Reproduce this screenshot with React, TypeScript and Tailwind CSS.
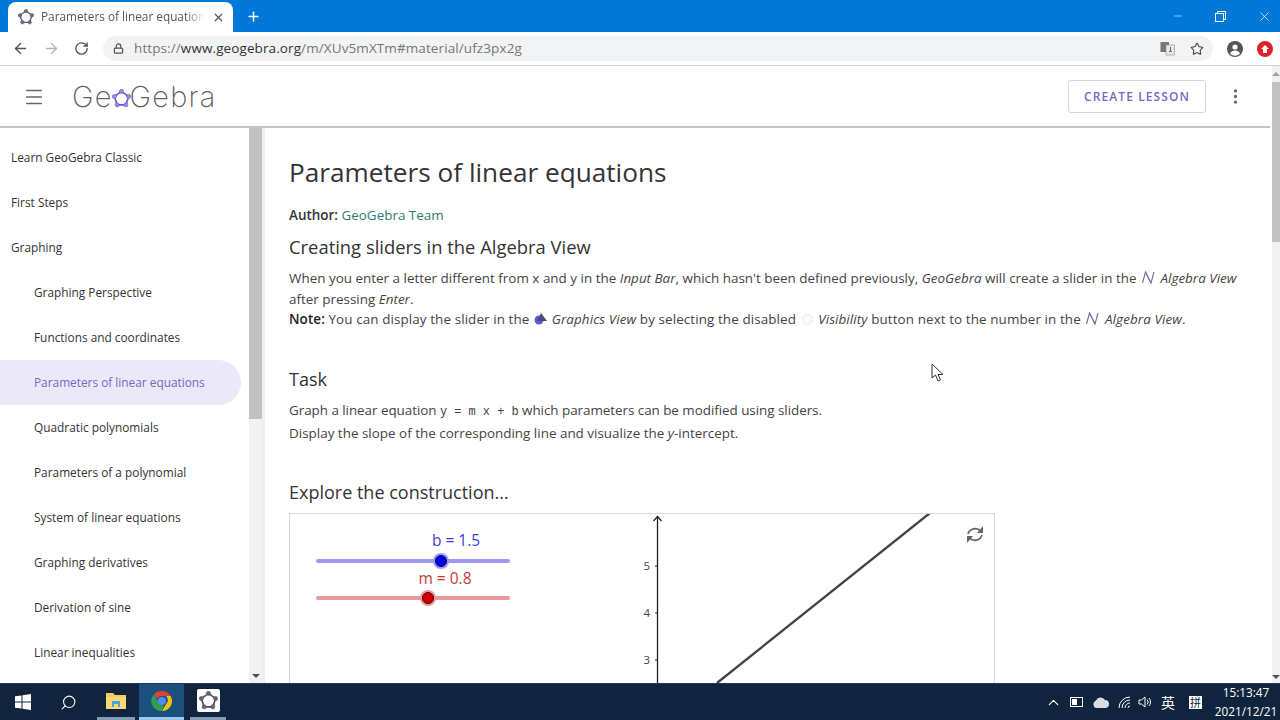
// App.tsx — browser window showing a GeoGebra lesson page, with the Windows taskbar below
import { ArrowLeft, ArrowRight, RotateCw, Lock, Star, Menu, MoreVertical, X, Plus, Minus, Search, ChevronUp } from 'lucide-react';

const NAV = [
  { label: 'Learn GeoGebra Classic' },
  { label: 'First Steps' },
  { label: 'Graphing' },
  { label: 'Graphing Perspective', sub: true },
  { label: 'Functions and coordinates', sub: true },
  { label: 'Parameters of linear equations', sub: true, active: true },
  { label: 'Quadratic polynomials', sub: true },
  { label: 'Parameters of a polynomial', sub: true },
  { label: 'System of linear equations', sub: true },
  { label: 'Graphing derivatives', sub: true },
  { label: 'Derivation of sine', sub: true },
  { label: 'Linear inequalities', sub: true },
];

const FONT = "font-['Open_Sans','Noto_Sans',sans-serif]";

// GeoGebra mark: pentagon with dots on its corners
function Pentagon({ size, stroke = '#6557d2', dot = '#9a8fe0' }: { size: number; stroke?: string; dot?: string }) {
  const pts = [[12, 3], [21, 9.5], [17.5, 20], [6.5, 20], [3, 9.5]];
  return (
    <svg width={size} height={size} viewBox="0 0 24 24" className="shrink-0">
      <polygon points={pts.map(p => p.join(',')).join(' ')} fill="none" stroke={stroke} strokeWidth="2" />
      {pts.map(p => <circle key={p[0]} cx={p[0]} cy={p[1]} r="2.6" fill={dot} stroke={stroke} strokeWidth="0.8" />)}
    </svg>
  );
}

function AlgebraIcon() {
  return (
    <svg width="15" height="15" viewBox="0 0 15 15" className="inline-block align-[-2px] mx-[1px]">
      <path d="M1.5 13 L4.5 2 L10 13 L13 2" fill="none" stroke="#6f717e" strokeWidth="1.1" />
      <path d="M4.5 2 L10 13" fill="none" stroke="#7d72d8" strokeWidth="1.2" />
    </svg>
  );
}

function ChromeLogo() {
  return (
    <svg width="22" height="22" viewBox="0 0 24 24">
      <path d="M12 1a11 11 0 0 1 9.5 5.5H12a5.5 5.5 0 0 0-5.2 3.6L3.2 4.6A11 11 0 0 1 12 1z" fill="#db4437" />
      <path d="M21.5 6.5A11 11 0 0 1 12 23l4.8-8.2a5.5 5.5 0 0 0-.6-8.3z" fill="#f4c20d" />
      <path d="M12 23A11 11 0 0 1 3.2 4.6l4.8 8.7a5.5 5.5 0 0 0 6.3 3.2z" fill="#2f9e4f" />
      <circle cx="12" cy="12" r="4.4" fill="#4f8df5" />
    </svg>
  );
}

function TabStrip() {
  return (
    <div className="h-8 shrink-0 bg-[#0078d7] flex items-end text-white">
      <div className="ml-2 w-[225px] h-[30px] bg-white rounded-t-lg flex items-center pl-[10px] pr-2 gap-[7px]">
        <Pentagon size={16} stroke="#5b5670" dot="#6f6a88" />
        <span className="flex-1 text-[11.8px] text-[#555] whitespace-nowrap overflow-hidden [mask-image:linear-gradient(to_right,black_88%,transparent)]">
          Parameters of linear equations
        </span>
        <X size={13} strokeWidth={2.2} className="text-[#555]" />
      </div>
      <div className="ml-[13px] h-full flex items-center"><Plus size={15} strokeWidth={2.4} /></div>
      <div className="flex-1" />
      <div className="h-full flex items-center">
        <div className="w-[43px] flex justify-center"><Minus size={12} strokeWidth={1.2} /></div>
        <div className="w-[43px] flex justify-center">
          <svg width="11" height="11" viewBox="0 0 11 11" fill="none" stroke="white" strokeWidth="1">
            <rect x="0.5" y="2.5" width="8" height="8" />
            <path d="M2.5 2.5V0.5H10.5V8.5H8.5" />
          </svg>
        </div>
        <div className="ml-[6px] w-[32px] flex justify-center"><X size={15} strokeWidth={1.1} /></div>
      </div>
    </div>
  );
}

function Toolbar() {
  return (
    <div className="h-[34px] shrink-0 bg-white border-b border-[#cfcfcf] flex items-center text-[#555]">
      <ArrowLeft size={17} strokeWidth={2} className="ml-3" />
      <ArrowRight size={17} strokeWidth={2} className="ml-[14px] text-[#b5b5b5]" />
      <RotateCw size={15} strokeWidth={2.2} className="ml-[14px]" />
      <div className="ml-[14px] w-[1110px] h-[25px] rounded-full bg-[#f1f3f4] flex items-center pl-[10px]">
        <Lock size={11} strokeWidth={2.6} className="text-[#555]" />
        <span className="ml-[10px] text-[13.5px] tracking-[0.1px] text-[#777] whitespace-nowrap">
          https://<span className="text-[#333]">www.geogebra.org</span>/m/XUv5mXTm#material/ufz3px2g
        </span>
        <div className="flex-1" />
        <svg width="15" height="15" viewBox="0 0 15 15" className="mr-[15px]">
          <rect x="0.5" y="1" width="8.5" height="10" fill="#777" />
          <rect x="6" y="4" width="8.5" height="10" fill="#e8e8e8" stroke="#888" strokeWidth="0.6" />
          <path d="M9 10.5h3M10.5 6v4" stroke="#666" strokeWidth="1" />
        </svg>
        <Star size={14} strokeWidth={1.8} className="mr-[9px] text-[#444]" />
      </div>
      <svg width="16" height="16" viewBox="0 0 16 16" className="ml-[14px]">
        <circle cx="8" cy="8" r="8" fill="#555" />
        <circle cx="8" cy="6" r="2.6" fill="white" />
        <path d="M3 12.5c1.2-2.2 3-3 5-3s3.8.8 5 3a6.5 6.5 0 0 1-10 0z" fill="white" />
      </svg>
      <div className="ml-[14px] w-4 h-4 rounded-full bg-[#e0202a] flex items-center justify-center">
        <svg width="8" height="8" viewBox="0 0 8 8"><path d="M4 0L8 4H6V8H2V4H0z" fill="white" /></svg>
      </div>
    </div>
  );
}

function SiteHeader() {
  return (
    <div className="h-[62px] shrink-0 mr-[2px] pt-[1px] bg-white border-b-2 border-[#c4c4c4] flex items-center text-[#555]">
      <Menu size={22} strokeWidth={1.6} className="ml-[23px] text-[#666]" />
      <div className="ml-[27px] flex items-center text-[29px] leading-none tracking-[1.2px] text-[#5f5f5f] font-['Inter',sans-serif] font-extralight">
        Ge
        <span className="-mx-[1px] mt-[3px]"><Pentagon size={19} /></span>
        Gebra
      </div>
      <div className="flex-1" />
      <div className="w-[138px] h-[33px] border border-[#d5d5d5] rounded-[3px] flex items-center justify-center text-[12px] font-semibold tracking-[1.1px] text-[#7568c4]">
        CREATE LESSON
      </div>
      <MoreVertical size={19} strokeWidth={2.2} className="ml-5 mr-[25px] text-[#666]" />
    </div>
  );
}

function Sidebar() {
  return (
    <div className="w-[265px] shrink-0 flex border-r-[3px] border-[#eeeeee]">
      <div className="w-[249px] shrink-0 pt-[7px] overflow-hidden">
        {NAV.map(item => (
          <div
            key={item.label}
            className={`h-[45px] flex items-center text-[11.85px] whitespace-nowrap ${item.sub ? 'pl-[34px]' : 'pl-[11px]'} ${
              item.active ? 'w-[241px] bg-[#ebe8f8] rounded-r-full font-medium text-[#7568c4]' : 'text-[#333]'
            }`}
          >
            {item.label}
          </div>
        ))}
      </div>
      <div className="w-[13px] bg-[#f1f1f1] flex flex-col">
        <div className="h-[291px] bg-[#c1c1c1]" />
        <div className="flex-1" />
        <div className="h-[14px] flex items-center justify-center">
          <div className="w-0 h-0 border-x-[4px] border-x-transparent border-t-[4px] border-t-[#505050]" />
        </div>
      </div>
    </div>
  );
}

function Applet() {
  return (
    <div className="w-[706px] h-[300px] border border-[#d8d8d8] relative overflow-hidden">
      <svg width="704" height="298" viewBox="0 0 704 298" className="block">
        {/* sliders */}
        <line x1="28" y1="47" x2="218" y2="47" stroke="#9a9af5" strokeWidth="4" strokeLinecap="round" />
        <circle cx="151" cy="47" r="8" fill="#9a9af5" />
        <circle cx="151" cy="47" r="5.5" fill="#0000e0" stroke="#00006a" strokeWidth="1" />
        <text x="166" y="32" textAnchor="middle" fontSize="15.5" fill="#3d3dd0" fontFamily="Open Sans">b = 1.5</text>
        <line x1="28" y1="84" x2="218" y2="84" stroke="#e79a9a" strokeWidth="4" strokeLinecap="round" />
        <circle cx="138" cy="84" r="8" fill="#e79a9a" />
        <circle cx="138" cy="84" r="5.5" fill="#d00000" stroke="#5a0000" strokeWidth="1" />
        <text x="155" y="70" textAnchor="middle" fontSize="15.5" fill="#c83a3a" fontFamily="Open Sans">m = 0.8</text>
        {/* y axis */}
        <line x1="367.5" y1="2" x2="367.5" y2="298" stroke="#222" strokeWidth="1.3" />
        <path d="M363.5 7L367.5 2.5L371.5 7" fill="none" stroke="#222" strokeWidth="1.3" />
        {[[5, 52], [4, 99], [3, 146]].map(([n, y]) => (
          <g key={n}>
            <line x1="365" y1={y} x2="367.5" y2={y} stroke="#222" />
            <text x="360" y={y + 4} textAnchor="end" fontSize="11.5" fill="#444" fontFamily="Open Sans">{n}</text>
          </g>
        ))}
        {/* line y = m x + b */}
        <line x1="427" y1="169" x2="640" y2="-1" stroke="#444" strokeWidth="2.4" />
        {/* reset */}
        <g transform="translate(0 -1)">
          <g fill="none" stroke="#666" strokeWidth="1.8">
            <path d="M678 21a7.5 7.5 0 0 1 13-2.5" />
            <path d="M692 22a7.5 7.5 0 0 1-13 2.5" />
          </g>
          <path d="M693 13v7h-6z M677 30v-7h6z" fill="#666" />
        </g>
      </svg>
    </div>
  );
}

function Article() {
  return (
    <div className="flex-1 min-w-0 pl-6 pt-[23px] overflow-hidden text-[#444] text-[13.45px] leading-[20.5px]">
      <h1 className="text-[26.2px] leading-[42px] text-[#333] whitespace-nowrap">Parameters of linear equations</h1>
      <p className="mt-[12px] leading-[20px] whitespace-nowrap">
        <span className="font-semibold text-[#333]">Author:</span> <span className="text-[#2e7d6e]">GeoGebra Team</span>
      </p>
      <h2 className="mt-[9px] text-[18.4px] leading-[26px] text-[#333] whitespace-nowrap">Creating sliders in the Algebra View</h2>
      <p className="mt-[8px] whitespace-nowrap">
        When you enter a letter different from x and y in the <i>Input Bar</i>, which hasn't been defined previously, <i>GeoGebra</i> will create a slider in the <AlgebraIcon /> <i>Algebra View</i>
        <br />
        after pressing <i>Enter</i>.
        <br />
        <span className="tracking-[0.09px]">
          <b className="font-semibold text-[#222]">Note:</b> You can display the slider in the{' '}
          <svg width="15" height="13" viewBox="0 0 15 13" className="inline-block align-[-1px]">
            <circle cx="6" cy="8" r="4.5" fill="#6557d2" />
            <path d="M8 1L14 9H4z" fill="#4c4a78" />
          </svg>{' '}
          <i>Graphics View</i> by selecting the disabled{' '}
          <span className="inline-block w-[11px] h-[11px] mx-[2px] rounded-full border border-[#e8e8e8] bg-[#fafafa] align-[-1px]" />{' '}
          <i>Visibility</i> button next to the number in the <AlgebraIcon /> <i>Algebra View</i>.
        </span>
      </p>
      <h2 className="mt-[36px] text-[18px] leading-[26px] text-[#333]">Task</h2>
      <p className="mt-[8px] leading-[21px] whitespace-nowrap">
        <span className="tracking-[-0.05px]">
          Graph a linear equation <span className="font-['Liberation_Mono',monospace] text-[12px]">y = m x + b</span> which parameters can be modified using sliders.
        </span>
        <br />
        Display the slope of the corresponding line and visualize the <i>y</i>-intercept.
      </p>
      <h2 className="mt-[35px] text-[18px] leading-[26px] text-[#333]">Explore the construction...</h2>
      <div className="mt-[8px]"><Applet /></div>
    </div>
  );
}

function PageScrollbar() {
  return (
    <div className="w-2 shrink-0 bg-[#f1f1f1] flex flex-col">
      <div className="h-[16px] flex items-center justify-center">
        <div className="w-0 h-0 border-x-[4px] border-x-transparent border-b-[4px] border-b-[#a0a0a0]" />
      </div>
      <div className="h-[160px] bg-[#c1c1c1]" />
      <div className="flex-1" />
      <div className="h-[12px] flex items-center justify-center">
        <div className="w-0 h-0 border-x-[4px] border-x-transparent border-t-[4px] border-t-[#505050]" />
      </div>
    </div>
  );
}

function Taskbar() {
  return (
    <div className="h-[37px] shrink-0 bg-[#10253d] border-t border-[#1d3a58] flex items-stretch text-white">
      <div className="w-[46px] flex items-center justify-center">
        <svg width="16" height="16" viewBox="0 0 16 16" fill="white">
          <path d="M0 2.3L6.5 1.4V7.5H0z M7.5 1.2L16 0V7.5H7.5z M0 8.5H6.5V14.6L0 13.7z M7.5 8.5H16V16L7.5 14.8z" />
        </svg>
      </div>
      <div className="w-[46px] pr-[2px] flex items-center justify-center">
        <Search size={17} strokeWidth={1.5} className="-scale-x-100" />
      </div>
      <div className="w-[47px] pl-[5px] pr-[4px] flex">
        <div className="flex-1 flex items-center justify-center border-b-[3px] border-[#7f9bb5]">
          <svg width="22" height="19" viewBox="0 0 22 19">
            <path d="M1 2h7l2 2h11v14H1z" fill="#f3c95c" />
            <rect x="1" y="6" width="20" height="12" fill="#f7d977" />
            <rect x="7" y="10" width="8" height="6" fill="#4aa6dc" />
            <rect x="9" y="13" width="4" height="3" fill="#f7d977" />
          </svg>
        </div>
      </div>
      <div className="w-[45px] bg-[#1b4f7d] flex items-center justify-center border-b-[3px] border-[#9cc7ea]">
        <ChromeLogo />
      </div>
      <div className="w-[47px] pl-[6px] pr-[5px] flex">
        <div className="flex-1 flex items-center justify-center border-b-[3px] border-[#7f9bb5]">
          <div className="w-[23px] h-[23px] bg-white rounded-[2px] flex items-center justify-center">
            <Pentagon size={19} stroke="#4f4a63" dot="#6a6580" />
          </div>
        </div>
      </div>
      <div className="flex-1" />
      <div className="flex items-center">
        <ChevronUp size={17} strokeWidth={1.6} />
        <svg width="14" height="10" viewBox="0 0 14 10" className="ml-[8px]">
          <rect x="0.5" y="0.5" width="12" height="9" fill="none" stroke="white" />
          <rect x="2" y="2" width="5" height="6" fill="white" />
        </svg>
        <svg width="17" height="11" viewBox="0 0 17 11" className="ml-[8px]">
          <path d="M4 11a4 4 0 0 1 0-7.5A5 5 0 0 1 13 3a4 4 0 0 1 0 8z" fill="#d9dee4" />
        </svg>
        <svg width="15" height="15" viewBox="0 0 15 15" fill="none" stroke="white" strokeWidth="1" className="ml-[8px]">
          <path d="M2 13a11 11 0 0 1 11-11 M5 13a8 8 0 0 1 8-8 M8 13a5 5 0 0 1 5-5 M11 13a2 2 0 0 1 2-2" />
        </svg>
        <svg width="15" height="14" viewBox="0 0 15 14" fill="none" stroke="white" strokeWidth="1" className="ml-[6px]">
          <path d="M1 5h2.5L7 2v10L3.5 9H1z M9 4.5a3.5 3.5 0 0 1 0 5 M11 3a6 6 0 0 1 0 8" />
        </svg>
        <span className="ml-[8px] text-[14px] font-['Noto_Sans_CJK_SC',sans-serif]">英</span>
        <div className="ml-[14px] w-[13px] h-[13px] bg-white text-[#10253d] text-[11px] leading-[13px] text-center font-['Noto_Sans_CJK_SC',sans-serif]">拼</div>
      </div>
      <div className="w-[66px] ml-[11px] mr-[1px] flex flex-col items-center justify-center text-[11.8px] leading-[19px] whitespace-nowrap">
        <span>15:13:47</span>
        <span>2021/12/21</span>
      </div>
    </div>
  );
}

export default function App() {
  return (
    <div className={`w-[1280px] h-[720px] flex flex-col overflow-hidden bg-white relative ${FONT}`}>
      <TabStrip />
      <Toolbar />
      <div className="flex-1 min-h-0 flex">
        <div className="flex-1 min-w-0 flex flex-col">
          <SiteHeader />
          <div className="flex-1 min-h-0 flex">
            <Sidebar />
            <Article />
          </div>
        </div>
        <PageScrollbar />
      </div>
      <Taskbar />
      {/* mouse pointer */}
      <svg width="14" height="20" viewBox="0 0 14 20" className="absolute left-[931px] top-[363px]">
        <path d="M1 1V15L4.5 12L7 18L9.5 17L7 11.5H12z" fill="white" stroke="#333" strokeWidth="1" />
      </svg>
    </div>
  );
}
